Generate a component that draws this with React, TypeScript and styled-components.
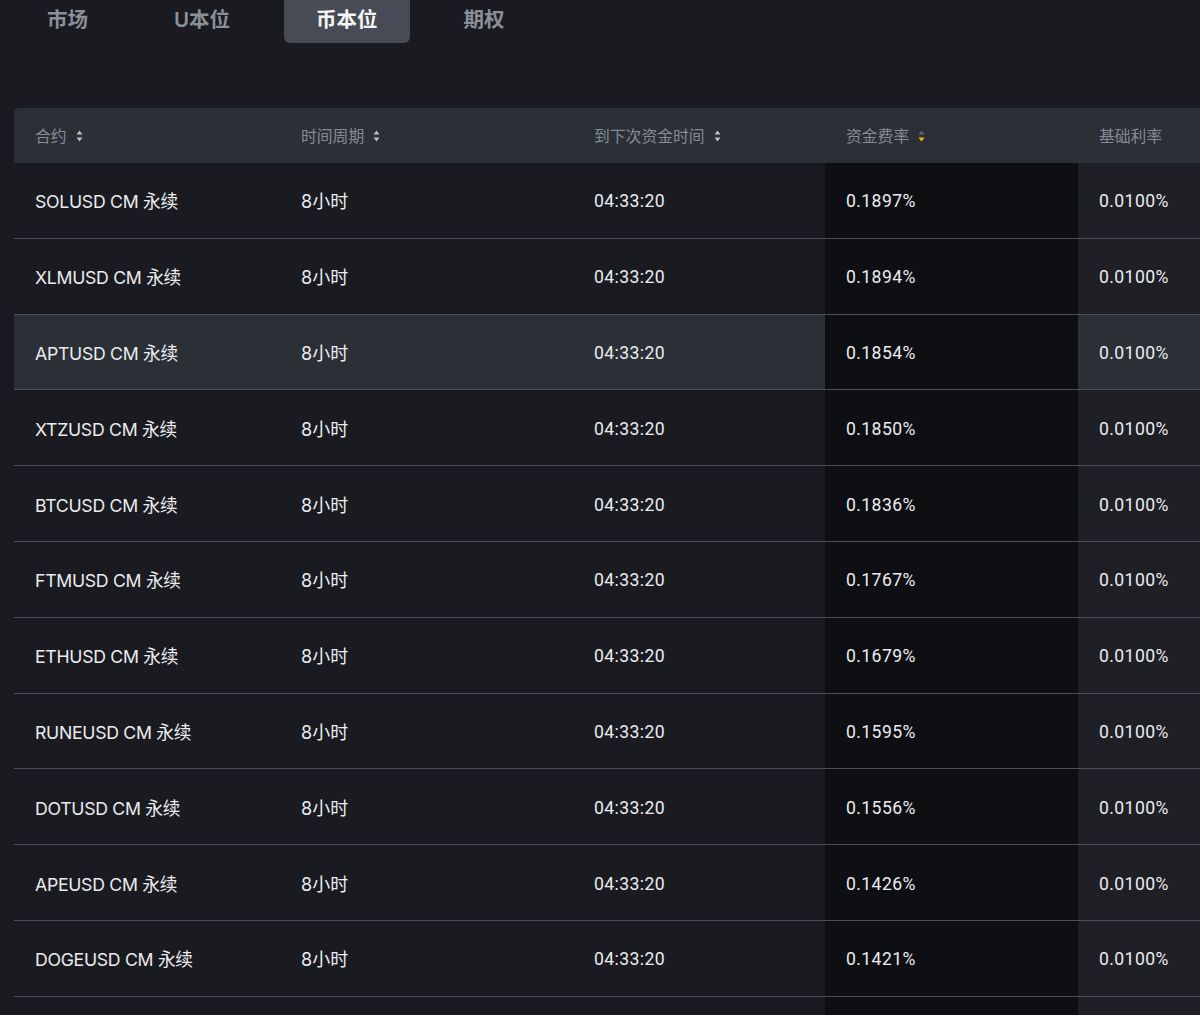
import React from "react";
import styled, { createGlobalStyle } from "styled-components";

const Global = createGlobalStyle`
  html, body { margin: 0; padding: 0; background: #1a1b20; overflow: hidden; }
  body { font-family: Inter, "Noto Sans CJK SC", sans-serif; }
`;

const Page = styled.div`
  width: 1200px;
  height: 1015px;
  overflow: hidden;
  background: #1a1b20;
`;

const Tabs = styled.div`
  display: flex;
  gap: 22px;
  padding-left: 15px;
  margin-top: -8px;
`;

const Tab = styled.div<{ $active?: boolean }>`
  height: 51px;
  padding: 0 32px;
  display: flex;
  align-items: center;
  border-radius: 6px;
  font-family: Inter, "Noto Sans CJK SC", sans-serif;
  font-size: 20.5px;
  font-weight: 600;
  color: ${(p) => (p.$active ? "#f5f5f5" : "#8a8f98")};
  background: ${(p) => (p.$active ? "#474b55" : "transparent")};
`;

const Table = styled.div`
  margin: 65px 0 0 14px;
  width: 1300px;
`;

const cols = "266px 293px 252px 253px 236px";

const HeaderRow = styled.div`
  display: grid;
  grid-template-columns: ${cols};
  height: 55px;
  background: #2b2f36;
  border-top-left-radius: 4px;
`;

const HeadCell = styled.div`
  display: flex;
  align-items: center;
  gap: 9px;
  padding-left: 21px;
  font-family: "Noto Sans CJK SC", sans-serif;
  font-size: 15.8px;
  color: #848b96;
`;

const Row = styled.div<{ $hover?: boolean }>`
  display: grid;
  grid-template-columns: ${cols};
  height: 75.8px;
  box-sizing: border-box;
  border-bottom: 1.5px solid #4a4e56;
  background: ${(p) => (p.$hover ? "#2b2f36" : "#1a1b20")};
`;

const Cell = styled.div<{ $tone?: "rate" | "base"; $hover?: boolean }>`
  display: flex;
  align-items: center;
  padding-left: 21px;
  color: #eaecef;
  background: ${(p) =>
    p.$tone === "rate"
      ? "#0e0f12"
      : p.$tone === "base"
      ? p.$hover
        ? "#2b2f36"
        : "#1e2025"
      : "transparent"};
`;

const NameText = styled.span`
  font-family: Inter, "Noto Sans CJK SC", sans-serif;
  font-size: 17.7px;
  font-weight: 400;
  letter-spacing: -0.3px;
`;

const NumText = styled.span`
  font-family: Roboto, "Noto Sans CJK SC", sans-serif;
  font-size: 17.6px;
  font-weight: 400;
  letter-spacing: 0.4px;
  padding-top: 2px;
`;

const PeriodText = styled.span`
  font-family: Inter, "Noto Sans CJK SC", sans-serif;
  font-size: 18px;
  font-weight: 400;
`;

const Sort = ({ active }: { active?: boolean }) => (
  <svg width="7" height="12" viewBox="0 0 7 12">
    <path d="M3.5 0.5 L6.5 4.5 L0.5 4.5 Z" fill={active ? "#5e6470" : "#b7bdc6"} />
    <path d="M3.5 11.5 L6.5 7.5 L0.5 7.5 Z" fill={active ? "#f0b90b" : "#b7bdc6"} />
  </svg>
);

const rows = [
  ["SOLUSD", "0.1897%"],
  ["XLMUSD", "0.1894%"],
  ["APTUSD", "0.1854%"],
  ["XTZUSD", "0.1850%"],
  ["BTCUSD", "0.1836%"],
  ["FTMUSD", "0.1767%"],
  ["ETHUSD", "0.1679%"],
  ["RUNEUSD", "0.1595%"],
  ["DOTUSD", "0.1556%"],
  ["APEUSD", "0.1426%"],
  ["DOGEUSD", "0.1421%"],
];

export default function App() {
  return (
    <Page>
      <Global />
      <Tabs>
        <Tab>市场</Tab>
        <Tab>U本位</Tab>
        <Tab $active>币本位</Tab>
        <Tab>期权</Tab>
      </Tabs>
      <Table>
        <HeaderRow>
          <HeadCell>合约 <Sort /></HeadCell>
          <HeadCell>时间周期 <Sort /></HeadCell>
          <HeadCell>到下次资金时间 <Sort /></HeadCell>
          <HeadCell>资金费率 <Sort active /></HeadCell>
          <HeadCell>基础利率</HeadCell>
        </HeaderRow>
        {rows.map(([sym, rate], i) => {
          const hover = i === 2;
          return (
            <Row key={sym} $hover={hover}>
              <Cell><NameText>{sym} CM 永续</NameText></Cell>
              <Cell><PeriodText>8小时</PeriodText></Cell>
              <Cell><NumText>04:33:20</NumText></Cell>
              <Cell $tone="rate"><NumText>{rate}</NumText></Cell>
              <Cell $tone="base" $hover={hover}><NumText>0.0100%</NumText></Cell>
            </Row>
          );
        })}
        <Row>
          <Cell />
          <Cell />
          <Cell />
          <Cell $tone="rate" />
          <Cell $tone="base" />
        </Row>
      </Table>
    </Page>
  );
}
